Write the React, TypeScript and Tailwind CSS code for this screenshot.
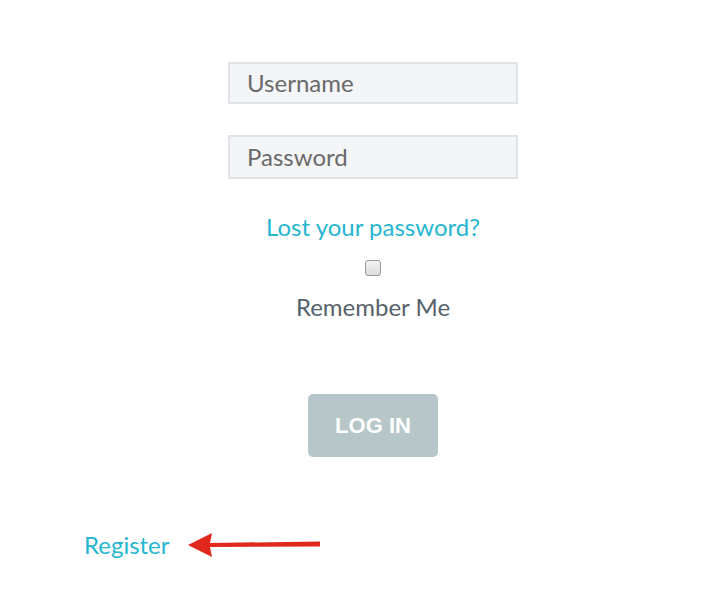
import React from "react";

const App = () => {
  return (
    <div className="w-[718px] h-[614px] bg-white font-['Lato','Open_Sans',sans-serif]">
      <div className="flex flex-col items-center pl-[28px] pt-[62px]">
        <div className="w-[290px] h-[42px] bg-[#f3f5f7] border-2 border-[#dfe3e7] flex items-center pl-[17px] text-[24px] text-[#6a6a6a]">
          Username
        </div>
        <div className="w-[290px] h-[44px] mt-[31px] bg-[#f3f5f7] border-2 border-[#dfe3e7] flex items-center pl-[17px] text-[24px] text-[#6a6a6a]">
          Password
        </div>
        <a className="mt-[33px] text-[24px] leading-[30px] text-[#25b6d0]">Lost your password?</a>
        <div className="mt-[18px] w-[16px] h-[16px] rounded-[3px] border border-[#9a9a9a] bg-gradient-to-b from-[#f4f4f4] to-[#dcdcdc]" />
        <div className="mt-[16px] text-[24px] leading-[30px] text-[#56626b]">Remember Me</div>
        <button className="mt-[72px] w-[130px] h-[63px] rounded-[5px] bg-[#b7c6c9] text-white font-['Liberation_Sans',sans-serif] font-bold text-[22px]">
          LOG IN
        </button>
      </div>
      <div className="flex items-center mt-[73px] pl-[84px]">
        <a className="text-[24px] leading-[30px] text-[#25b6d0]">Register</a>
        <svg width="136" height="26" viewBox="0 0 136 26" className="ml-[16px]">
          <polygon points="2,13 26,1 24,11 134,9.5 134,14.5 24,15 26,25" fill="#e0281c" />
        </svg>
      </div>
    </div>
  );
};

export default App;
